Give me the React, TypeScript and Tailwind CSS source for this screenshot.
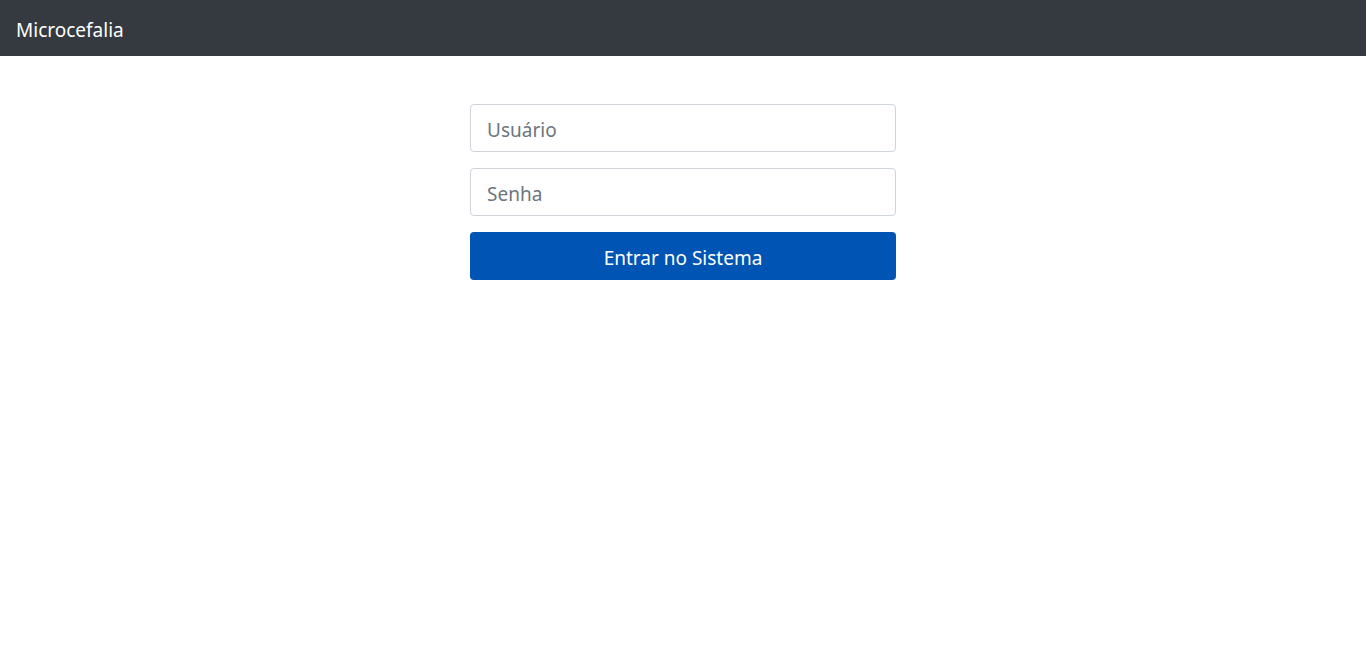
const font = { fontFamily: '"Segoe UI", "Noto Sans", "Open Sans", sans-serif' }

const inputClass =
  'h-12 rounded-[4px] border border-[#ced4da] px-4 pt-1 text-[19px] text-[#495057] outline-none placeholder:text-[#6c757d]'

export default function App() {
  return (
    <div className="min-h-screen bg-white" style={font}>
      <nav className="flex h-14 items-center bg-[#343a40] px-4 pt-1">
        <span className="text-[19px] leading-[30px] text-white">Microcefalia</span>
      </nav>
      <main className="flex justify-center pt-12">
        <form className="flex w-[426px] flex-col gap-4" onSubmit={(e) => e.preventDefault()}>
          <input type="text" placeholder="Usuário" className={inputClass} />
          <input type="password" placeholder="Senha" className={inputClass} />
          <button
            type="submit"
            className="h-12 rounded-[4px] bg-[#0054b4] pt-1 text-[19px] text-white"
          >
            Entrar no Sistema
          </button>
        </form>
      </main>
    </div>
  )
}
